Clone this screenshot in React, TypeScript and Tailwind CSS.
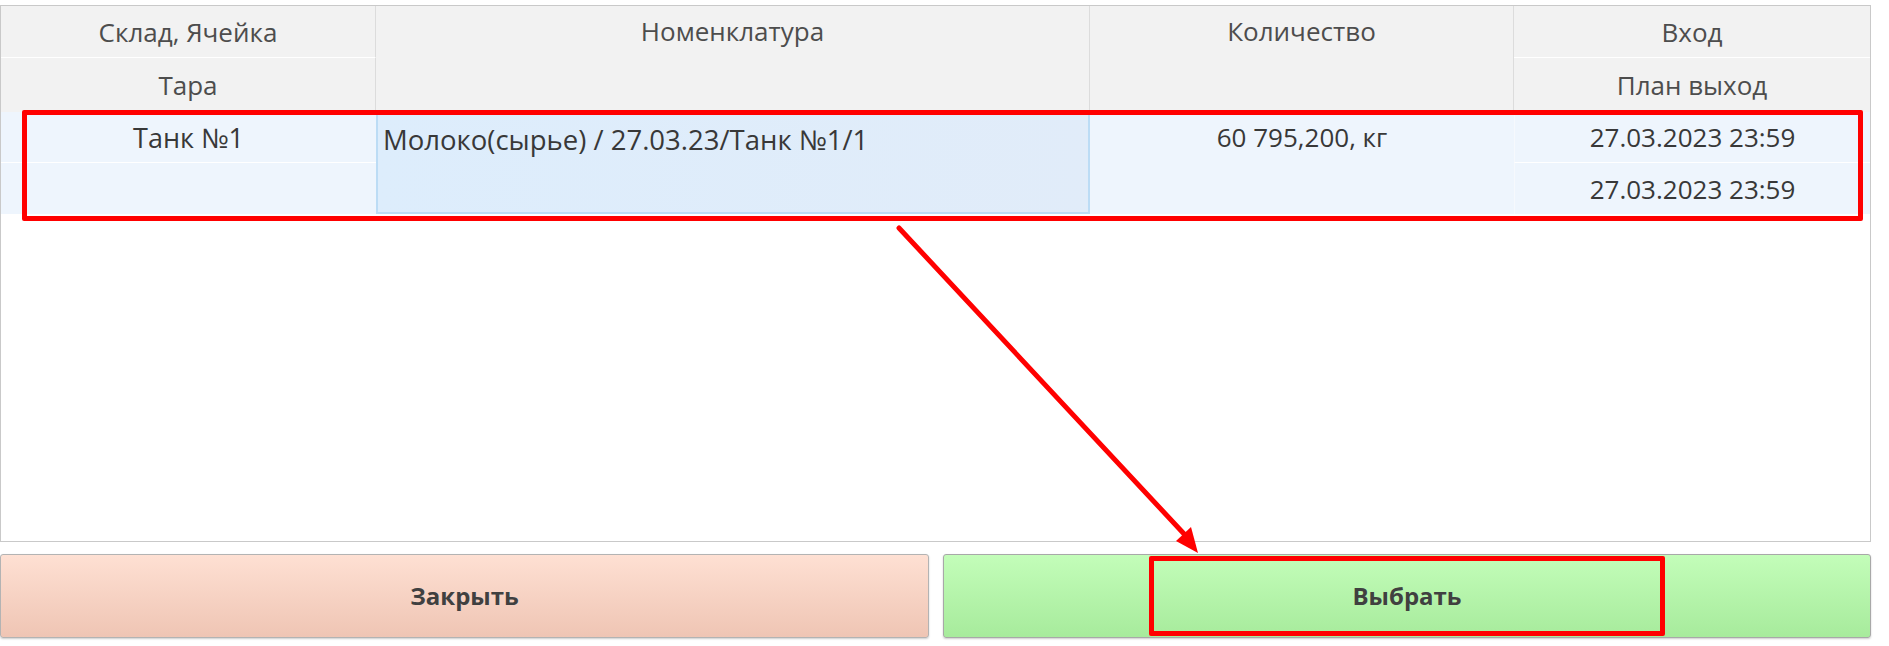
import React from "react";

const headCell =
  "bg-[#f2f2f2] text-[#4d4d4d] text-center flex justify-center";

export default function App() {
  return (
    <div
      className="relative w-[1889px] h-[646px] bg-white overflow-hidden"
      style={{ fontFamily: '"Open Sans", "DejaVu Sans", sans-serif' }}
    >
      {/* TABLE */}

      <div className="mt-[5px] w-[1871px] h-[537px] border border-[#c9c9c9] bg-white">
        <div className="grid grid-cols-[375px_714px_424px_356px] grid-rows-[52px_54px_51px_51px] text-[26px] leading-none">
          <div className={`${headCell} items-center border-r border-[#dcdcdc] border-b border-b-white`}>
            Склад, Ячейка
          </div>

          <div className={`${headCell} row-span-2 pt-[12px] border-r border-[#dcdcdc]`}>
            Номенклатура
          </div>

          <div className={`${headCell} row-span-2 pt-[12px] border-r border-[#dcdcdc]`}>
            Количество
          </div>

          <div className={`${headCell} items-center border-b border-b-white`}>
            Вход
          </div>

          <div className={`${headCell} items-center border-r border-[#dcdcdc]`}>
            Тара
          </div>

          <div className={`${headCell} items-center`}>
            План выход
          </div>

          {/* ROW */}

          <div className="bg-[#eef5fd] text-[#383838] flex items-center justify-center border-b border-white text-[27px]">
            Танк №1
          </div>

          <div className="row-span-2 bg-gradient-to-r from-[#ddedfc] to-[#e1ecf9] border-2 border-[#bcdcf5] text-[#383838] pl-[5px] pt-[12px] text-[27.5px]">
            Молоко(сырье) / 27.03.23/Танк №1/1
          </div>

          <div className="row-span-2 bg-[#eef5fd] text-[#383838] flex justify-center pt-[12px]">
            60 795,200, кг
          </div>

          <div className="bg-[#eef5fd] text-[#383838] flex items-center justify-center border-b border-white border-l border-l-[#f6f9fd]">
            27.03.2023 23:59
          </div>

          <div className="bg-[#eef5fd]"></div>

          <div className="bg-[#eef5fd] text-[#383838] flex items-center justify-center border-l border-l-[#f6f9fd]">
            27.03.2023 23:59
          </div>
        </div>
      </div>

      {/* BUTTONS */}

      <div className="mt-[12px] flex gap-[14px] w-[1871px]">
        <button className="w-[929px] h-[84px] rounded-[3px] border border-[#b3b3b3] bg-gradient-to-b from-[#fee0d3] to-[#efc5b4] text-[#404040] text-[24px] font-bold shadow-[0_1px_2px_rgba(0,0,0,0.2)]">
          Закрыть
        </button>

        <button className="flex-1 h-[84px] rounded-[3px] border border-[#a8a8a8] bg-gradient-to-b from-[#c3fdb9] to-[#a7eb9c] text-[#404040] text-[24px] font-bold flex items-center justify-center shadow-[0_1px_2px_rgba(0,0,0,0.2)]">
          Выбрать
        </button>
      </div>

      {/* ANNOTATIONS */}

      <div className="absolute left-[22px] top-[110px] w-[1841px] h-[111px] border-[5px] border-[#ff0000] rounded-[2px]"></div>

      <div className="absolute left-[1149px] top-[556px] w-[516px] h-[80px] border-[5px] border-[#ff0000] rounded-[2px]"></div>

      <svg
        className="absolute left-0 top-0"
        width="1889"
        height="646"
        viewBox="0 0 1889 646"
      >
        <line
          x1="899"
          y1="228"
          x2="1186"
          y2="536"
          stroke="#ff0000"
          strokeWidth="5"
          strokeLinecap="round"
        />
        <polygon points="1198,553 1176,541 1191,527" fill="#ff0000" />
      </svg>
    </div>
  );
}
